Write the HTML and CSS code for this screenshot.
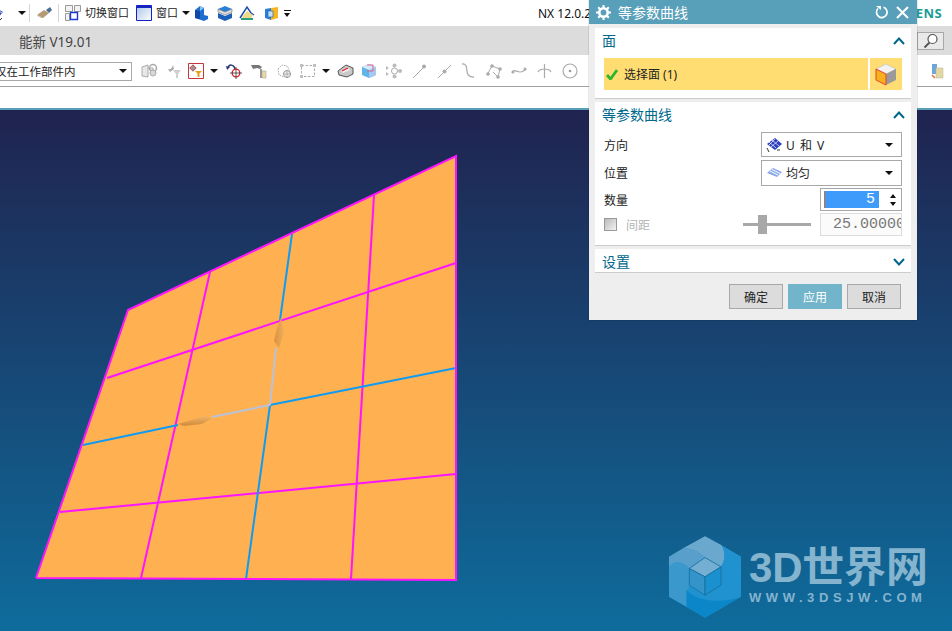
FILE: index.html
```html
<!DOCTYPE html>
<html lang="zh">
<head>
<meta charset="utf-8">
<title>等参数曲线</title>
<link rel="stylesheet" href="styles.css">
</head>
<body>
<div class="app">
  <div class="bar-quick">
    <svg class="ico mesh" width="16" height="16" viewBox="0 0 16 16"><path d="M-7 8 2 2l8 5-6 7z" fill="#3a4fc0"/><path d="M-3 5l8 6M1 2.500l8 5.500M-2 12 6 4" stroke="#fff" stroke-width=".8"/><path d="M5 13l2 2 2-2" fill="none" stroke="#333"/></svg>
    <span class="caret c-a"></span>
    <span class="sep s-a"></span>
    <svg class="ico m-brush" width="17" height="16" viewBox="0 0 17 16"><path d="M1 10 8 5l5 3-6 5z" fill="#b59a72"/><path d="M10 5l4-3 2 3-3 3z" fill="#4a6f90"/><path d="M1 10l4 3 2 0-4-1z" fill="#7a6038"/></svg>
    <span class="sep s-b"></span>
    <svg class="ico m-switch" width="16" height="16" viewBox="0 0 16 16"><path d="M.5.500h7v6h-7zM9.500.500h6v6h-6zM.5 8.500h4v7h-4z" fill="#f3f3f3" stroke="#999"/><path d="M5.500 7.500h7v7h-7z" fill="#fff" stroke="#1c3ad0" stroke-width="1.400"/></svg>
    <span class="qt t-switch">切换窗口</span>
    <svg class="ico m-win" width="16" height="16" viewBox="0 0 16 16"><defs><linearGradient id="w" x1="0" y1="0" x2="1" y2="1"><stop offset="0" stop-color="#a8c4e8"/><stop offset="1" stop-color="#fff"/></linearGradient></defs><path d="M.5.500h15v15H.5z" fill="url(#w)" stroke="#1322c8"/><path d="M1 1h14v2H1z" fill="#1526c0"/></svg>
    <span class="qt t-win">窗口</span>
    <span class="caret c-b"></span>
    <svg class="ico m-a" width="15" height="16" viewBox="0 0 15 16"><path d="M1 13V5l5-4 4 2v7l4 1v3l-4 2z" fill="#1f6fd0"/><path d="M6 1l4 2-4 3z" fill="#8dc0f0"/><path d="M1 5l5 1v8l-5-1z" fill="#1048a8"/></svg>
    <svg class="ico m-b" width="16" height="16" viewBox="0 0 16 16"><path d="M1 4l7-3 7 3-7 3z" fill="#2a7fd8"/><path d="M1 4v3l7 3 7-3V4l-7 3z" fill="#ddd" stroke="#555" stroke-width=".5"/><path d="M1 8v5l7 3 7-3V8l-7 3z" fill="#1b5fb8"/></svg>
    <svg class="ico m-c" width="16" height="16" viewBox="0 0 16 16"><path d="M1 13 8 2l4 6 3 2" fill="none" stroke="#1a4fb0" stroke-width="1.500"/><path d="M3 12l5-6 6 4-2 4H4z" fill="#eedb8a"/><path d="M2 14h12" stroke="#2aa080" stroke-width="2"/></svg>
    <svg class="ico m-d" width="15" height="16" viewBox="0 0 15 16"><path d="M7 3l7-1v11l-7 2z" fill="#f7b51e"/><path d="M1 4l6-1v12l-6-2z" fill="#2c7fd8"/><path d="M4 6h5v6H4z" fill="#bfe0f8" stroke="#1d5cb0" stroke-width=".6"/></svg>
    <span class="menu-more"></span>
    <span class="nx">NX 12.0.2</span>
    <span class="brand">SIEMENS</span>
  </div>

  <div class="bar-title">
    <span class="doc">能新 V19.01</span>
    <span class="search">
      <svg width="16" height="16" viewBox="0 0 16 16"><circle cx="9.500" cy="6" r="4.500" fill="#fff" stroke="#555" stroke-width="1.200"/><path d="M6.500 9.500 1.500 14.500" stroke="#555" stroke-width="2"/></svg>
    </span>
  </div>

  <div class="bar-select">
    <div class="scope"><span class="scope-text">仅在工作部件内</span><span class="caret caret-wide"></span></div>
    <svg class="ico g1" width="17" height="16" viewBox="0 0 17 16"><path d="M1 4l6-2v12l-6-1zM7 5h5v7" fill="#e8e8e8" stroke="#aaa"/><circle cx="12" cy="5" r="3.500" fill="none" stroke="#aaa" stroke-width="1.500"/><circle cx="12" cy="10" r="3" fill="#d8d8d8" stroke="#aaa"/></svg>
    <svg class="ico g2" width="15" height="16" viewBox="0 0 15 16"><path d="M0 5c2 3 5 1 6-3l1 4-4 3z" fill="#aaa"/><path d="M6 7h8l-3 4v4H9v-4z" fill="#d0d0d0"/></svg>
    <svg class="ico filter" width="16" height="16" viewBox="0 0 16 16"><path d="M.5.500h15v15H.5z" fill="#fff" stroke="#c8343c"/><circle cx="5" cy="5" r="2.300" fill="none" stroke="#c8343c"/><path d="M5 1.500v7M1.500 5h7" stroke="#444" stroke-width=".7"/><path d="M7 8h7l-2.500 2.500V14h-2v-3.500z" fill="#e8a01c"/></svg>
    <span class="caret c-f"></span>
    <svg class="ico g3" width="17" height="16" viewBox="0 0 17 16"><path d="M2 5c1-4 6-4 7 1" fill="none" stroke="#2d3a78" stroke-width="1.500"/><path d="M0 3l4 1-3 3z" fill="#2d3a78"/><circle cx="10" cy="10" r="3.800" fill="none" stroke="#e0202c" stroke-width="1.300"/><path d="M10 4v12M4 10h12" stroke="#333" stroke-width=".8"/></svg>
    <svg class="ico g4" width="17" height="16" viewBox="0 0 17 16"><path d="M1 2h8l3 2-2 2-3-1-4 1z" fill="#777"/><path d="M10 6h2v9h-2z" fill="#999"/><path d="M12 8h4v7h-4z" fill="#eed9a4" stroke="#999" stroke-width=".5"/></svg>
    <svg class="ico g5" width="16" height="16" viewBox="0 0 16 16"><path d="M2 6l4-4 5 1 2 3v3l-5 5-5-2z" fill="none" stroke="#aaa" stroke-dasharray="1.500 1"/><circle cx="11" cy="11" r="3.500" fill="#eee" stroke="#999"/><path d="M11 7v8M7 11h8" stroke="#999" stroke-width=".7"/></svg>
    <svg class="ico g6" width="16" height="16" viewBox="0 0 16 16"><path d="M1.500 2.500h13v11h-13z" fill="none" stroke="#aaa" stroke-dasharray="2.500 1.500"/><path d="M0 1h3v3H0zM13 1h3v3h-3zM0 12h3v3H0z" fill="#c0c0c0"/></svg>
    <span class="caret c-g"></span>
    <svg class="ico g7" width="17" height="16" viewBox="0 0 17 16"><path d="M1 8l8-6 7 3 0 6-6 3-8-2z" fill="#c9c9c9" stroke="#555"/><path d="M4 8l7-3 2 2-7 3z" fill="#eee"/><path d="M5 8l6-3" stroke="#e02830" stroke-width="1.300"/></svg>
    <svg class="ico g8" width="16" height="16" viewBox="0 0 16 16"><path d="M1 4l7-3 7 3v8l-7 3-7-3z" fill="#5fb4ea"/><path d="M8 7l7-3v8l-7 3z" fill="#a7c8ee"/><path d="M1 4l7 3 7-3-7-3z" fill="#d6e9f8"/><path d="M6 2h6v6H6" fill="none" stroke="#d8608a"/></svg>
    <svg class="ico g9" width="17" height="16" viewBox="0 0 17 16"><circle cx="8.500" cy="8" r="3" fill="none" stroke="#aaa"/><g fill="#bbb"><circle cx="8.500" cy="2.500" r="2"/><circle cx="8.500" cy="13.500" r="2"/><circle cx="14" cy="8" r="2"/><path d="M0 3l3 2-3 2zM0 9l3 2-3 2z"/></g></svg>
    <svg class="ico g10" width="15" height="16" viewBox="0 0 15 16"><path d="M1 15 13 3" stroke="#aaa"/><circle cx="12" cy="3.500" r="2" fill="#aaa"/></svg>
    <svg class="ico g11" width="15" height="16" viewBox="0 0 15 16"><path d="M1 15 14 2" stroke="#aaa"/><circle cx="7.500" cy="8.500" r="2" fill="#aaa"/></svg>
    <svg class="ico g12" width="15" height="16" viewBox="0 0 15 16"><path d="M2 1c9-1 0 14 12 13" fill="none" stroke="#aaa" stroke-width="1.300"/></svg>
    <svg class="ico g13" width="16" height="16" viewBox="0 0 16 16"><path d="M1 12 6 3l8 3-2 8-5-5" fill="none" stroke="#aaa"/><g fill="#aaa"><circle cx="6" cy="3" r="1.800"/><circle cx="14" cy="6" r="1.800"/><circle cx="12" cy="14" r="1.800"/><circle cx="2" cy="11" r="1.800"/></g></svg>
    <svg class="ico g14" width="16" height="16" viewBox="0 0 16 16"><path d="M1 10c3-7 6 4 14-4" fill="none" stroke="#aaa" stroke-width="1.300"/><circle cx="2" cy="9" r="1.500" fill="#aaa"/><circle cx="14" cy="6" r="1.500" fill="#aaa"/></svg>
    <svg class="ico g15" width="15" height="16" viewBox="0 0 15 16"><path d="M7.500 1v14M1 9c2-4 11-4 13 0" fill="none" stroke="#aaa" stroke-width="1.200"/></svg>
    <svg class="ico g16" width="16" height="16" viewBox="0 0 16 16"><circle cx="8" cy="8" r="7" fill="none" stroke="#aaa" stroke-width="1.200"/><circle cx="8" cy="8" r="1.300" fill="#999"/></svg>
    <svg class="ico g17" width="14" height="16" viewBox="0 0 14 16"><path d="M1 1h5v10H1z" fill="#6ea6dc"/><path d="M5 5h7v10H5z" fill="#e8d6a0" stroke="#a8b898" stroke-width=".5"/><path d="M1 12l3 3" stroke="#e0703c" stroke-width="1.500"/></svg>
    <span class="sep s-c"></span>
  </div>

  <div class="bar-gap"></div>

  <div class="viewport">
    <svg class="scene" width="952" height="521" viewBox="0 110 952 521">
      <defs>
        <linearGradient id="bump-v" x1="0" y1="0" x2="1" y2="0"><stop offset="0" stop-color="#d8923e"/><stop offset="1" stop-color="#f0ae5c"/></linearGradient>
        <linearGradient id="bump-h" x1="0" y1="0" x2="0" y2="1"><stop offset="0" stop-color="#f2b468"/><stop offset="1" stop-color="#cf8a38"/></linearGradient>
      </defs>
      <polygon class="sheet" points="128,310 456,156 456,580 36,578"/>
      <g class="pink">
        <line x1="210" y1="272" x2="141" y2="578"/>
        <line x1="374" y1="195" x2="351" y2="579"/>
        <line x1="107" y1="378" x2="456" y2="263"/>
        <line x1="60" y1="512" x2="456" y2="474"/>
      </g>
      <g class="cyan">
        <polyline points="292,234 280,320"/>
        <polyline points="270,405 246,579"/>
        <polyline points="83,445 178,425"/>
        <polyline points="270,405 456,368"/>
      </g>
      <g class="pale">
        <polyline points="276,348 270,405"/>
        <polyline points="212,417 270,405"/>
      </g>
      <path fill="url(#bump-v)" d="M281 318 284 333 279 348 274 341 277 328z"/>
      <path fill="url(#bump-h)" d="M178 424 205 416 212 418 202 424 184 426z"/>
      <g class="pink">
        <polyline points="36,578 128,310 456,156 456,580 36,578"/>
      </g>
    </svg>

    <div class="logo">
      <svg width="72" height="82" viewBox="27 33 216 245">
        <polygon points="135,33 243,95 243,215 135,278 27,215 27,95" fill="#1f92cf"/>
        <path d="M135 33 72 68C100 72 125 85 135 97L183 125C195 105 198 85 185 60Z" fill="#6aa8cd"/>
        <path d="M27 95 72 68C100 72 125 85 135 97L88 130C70 112 50 105 27 125Z" fill="#589fcc"/>
        <path d="M27 125C40 105 65 105 88 130V185L80 197C78 215 78 230 80 245L27 215Z" fill="#3b98cd"/>
        <path d="M80 195C110 230 190 235 243 215L135 278 80 245Z" fill="#0b86c8"/>
        <path d="M185 60 243 95V215C225 222 205 225 190 225L183 180V125C195 105 198 85 185 60Z" fill="#1f92cf"/>
        <g stroke="#17709f" stroke-width="2.500" stroke-linejoin="round">
          <polygon points="135,97 183,125 135,155 88,130" fill="#74aed2"/>
          <polygon points="88,130 135,155 135,210 88,180" fill="#3494ca"/>
          <polygon points="135,155 183,125 183,180 135,210" fill="#1a90cf"/>
        </g>
      </svg>
      <div class="logo-words">
        <div class="logo-main">3D世界网</div>
        <div class="logo-sub">WWW.3DSJW.COM</div>
      </div>
    </div>
  </div>

  <section class="dialog">
    <header class="dlg-head">
      <svg class="gear" width="15" height="15" viewBox="0 0 15 15"><circle cx="7.500" cy="7.500" r="4.200" fill="none" stroke="#fff" stroke-width="2.600"/><path d="M7.500 0v3M7.500 12v3M0 7.500h3M12 7.500h3M2.200 2.200l2 2M10.800 10.800l2 2M12.800 2.200l-2 2M4.200 10.800l-2 2" stroke="#fff" stroke-width="2"/></svg>
      <h1>等参数曲线</h1>
      <svg class="reset" width="14" height="14" viewBox="0 0 14 14"><path d="M8.500 2.200A5.300 5.300 0 1 1 3 3.500" fill="none" stroke="#fff" stroke-width="1.700"/><path d="M1 1h5v4z" fill="#fff"/></svg>
      <svg class="close" width="13" height="13" viewBox="0 0 13 13"><path d="M1 1l11 11M12 1 1 12" stroke="#fff" stroke-width="2"/></svg>
    </header>

    <div class="panel p-face">
      <div class="panel-head"><span>面</span><svg class="chev" width="12" height="8" viewBox="0 0 12 8"><path d="M1 7l5-5.500L11 7" fill="none" stroke="#00688b" stroke-width="2"/></svg></div>
      <div class="pick-row">
        <div class="pick">
          <svg width="12" height="11" viewBox="0 0 12 11"><path d="M1 6l3.500 4L11 1" fill="none" stroke="#2db52d" stroke-width="2.800"/></svg>
          <span>选择面 (1)</span>
        </div>
        <div class="pick-btn">
          <svg width="22" height="23" viewBox="0 0 22 23"><path d="M1 6l10-5 10 5-10 5z" fill="#f2f2f2" stroke="#bbb" stroke-width=".6"/><path d="M11 11l10-5v11l-10 5z" fill="#9a9a9a"/><path d="M1 6l10 5v11L1 17z" fill="#f5b01e" stroke="#e8432c"/></svg>
        </div>
      </div>
    </div>

    <div class="panel p-curve">
      <div class="panel-head"><span>等参数曲线</span><svg class="chev" width="12" height="8" viewBox="0 0 12 8"><path d="M1 7l5-5.500L11 7" fill="none" stroke="#00688b" stroke-width="2"/></svg></div>
      <div class="field f-dir">
        <label>方向</label>
        <div class="combo"><svg width="17" height="16" viewBox="0 0 17 16"><path d="M1 7l8-6 7 6-7 6z" fill="#2b3fc0"/><path d="M3 5l7 6M6 3l7 6M5 10l7-6M3 8l6-6" stroke="#fff" stroke-width=".7"/><path d="M1 11l2 4M11 13h3" stroke="#333"/></svg><span class="spaced">U 和 V</span><span class="caret"></span></div>
      </div>
      <div class="field f-pos">
        <label>位置</label>
        <div class="combo"><svg width="17" height="16" viewBox="0 0 17 16"><path d="M1 8l6-5 9 4-5 5z" fill="#8aa8e8"/><path d="M4 6l8 4M6 4.500l8 4" stroke="#fff"/></svg><span>均匀</span><span class="caret"></span></div>
      </div>
      <div class="field f-num">
        <label>数量</label>
        <div class="spin"><span class="spin-val">5</span><span class="spin-arrows"><i class="up"></i><i class="down"></i></span></div>
      </div>
      <div class="field f-gap">
        <span class="check"></span>
        <label>间距</label>
        <div class="slider"><i></i></div>
        <div class="num-off">25.00000</div>
      </div>
    </div>

    <div class="panel p-set">
      <div class="panel-head"><span>设置</span><svg class="chev" width="12" height="8" viewBox="0 0 12 8"><path d="M1 1l5 5.500L11 1" fill="none" stroke="#00688b" stroke-width="2"/></svg></div>
    </div>

    <footer class="dlg-foot">
      <button class="btn" type="button">确定</button>
      <button class="btn primary" type="button">应用</button>
      <button class="btn" type="button">取消</button>
    </footer>
  </section>
</div>
</body>
</html>
```
FILE: styles.css
```css
* { box-sizing: border-box; }
html, body { margin: 0; padding: 0; }
body {
  width: 952px;
  height: 631px;
  overflow: hidden;
  font-family: "Noto Sans", "Noto Sans CJK SC", sans-serif;
  font-size: 12px;
  color: #222;
  background: #fff;
}
.app { position: relative; width: 952px; height: 631px; display: flex; flex-direction: column; overflow: hidden; }
.ico { flex: none; display: block; }
.caret { display: inline-block; width: 0; height: 0; border-left: 4px solid transparent; border-right: 4px solid transparent; border-top: 4px solid #111; flex: none; }
.sep { width: 1px; height: 18px; background: #d4d4d4; flex: none; }

/* quick access bar */
.bar-quick { height: 26px; background: #fff; display: flex; align-items: center; flex: none; white-space: nowrap; }
.mesh { margin-left: -7px; }
.c-a { margin-left: 9px; }
.s-a { margin-left: 3px; }
.m-brush { margin-left: 6px; }
.s-b { margin-left: 5px; }
.m-switch { margin-left: 6px; }
.qt { font-size: 11px; color: #222; line-height: 14px; }
.t-switch { margin-left: 4px; width: 44px; }
.m-win { margin-left: 7px; }
.t-win { margin-left: 4px; width: 22px; }
.c-b { margin-left: 4px; }
.m-a { margin-left: 4px; }
.m-b { margin-left: 8px; }
.m-c { margin-left: 6px; }
.m-d { margin-left: 9px; }
.menu-more { width: 7px; height: 6px; margin-left: 5px; border-top: 1px solid #111; position: relative; flex: none; }
.menu-more::after { content: ""; position: absolute; left: 0; top: 2px; border-left: 3.500px solid transparent; border-right: 3.500px solid transparent; border-top: 4px solid #111; }
.nx { margin-left: 247px; font-size: 12px; color: #111; }
.brand { margin-left: auto; margin-right: 10px; color: #1a9c94; font-weight: 700; font-size: 13px; letter-spacing: .4px; }

/* document title bar */
.bar-title { height: 29px; background: #dcdcdc; display: flex; align-items: center; justify-content: space-between; padding: 0 8px 0 19px; flex: none; }
.doc { font-size: 13.500px; color: #444; }
.search { width: 27px; height: 18px; margin-top: 1px; background: #e9e9e9; border: 1px solid #a8a8a8; display: flex; align-items: center; justify-content: center; }

/* selection toolbar */
.bar-select { height: 32px; background: #fff; border-bottom: 1px solid #a0a0a0; display: flex; align-items: center; flex: none; white-space: nowrap; padding-top: 1px; }
.scope { width: 133px; height: 19px; margin-left: -1px; border: 1px solid #a8a8a8; display: flex; align-items: center; justify-content: space-between; padding-right: 4px; overflow: hidden; flex: none; }
.scope-text { font-size: 11.500px; margin-left: -5px; color: #222; }
.caret-wide { border-left-width: 4px; border-right-width: 4px; }
.g1 { margin-left: 9px; }
.g2 { margin-left: 9px; }
.filter { margin-left: 6px; }
.c-f { margin-left: 6px; }
.g3 { margin-left: 8px; }
.g4 { margin-left: 7px; }
.g5 { margin-left: 9px; }
.g6 { margin-left: 8px; }
.c-g { margin-left: 6px; }
.g7 { margin-left: 7px; }
.g8 { margin-left: 7px; }
.g9 { margin-left: 9px; }
.g10 { margin-left: 9px; }
.g11 { margin-left: 10px; }
.g12 { margin-left: 8px; }
.g13 { margin-left: 11px; }
.g14 { margin-left: 9px; }
.g15 { margin-left: 10px; }
.g16 { margin-left: 10px; }
.g17 { margin-left: 353px; }
.s-c { margin-left: 8px; }

.bar-gap { height: 23px; background: #fff; border-bottom: 2px solid #58a0b9; flex: none; }

/* 3D viewport */
.viewport { position: relative; flex: 1; background: linear-gradient(180deg, #20234f 0%, #0e6c9c 100%); }
.scene { display: block; }
.sheet { fill: #ffb152; }
.pink { fill: none; stroke: #ff14ff; stroke-width: 2; }
.cyan { fill: none; stroke: #0f9bf2; stroke-width: 2; }
.pale { fill: none; stroke: #b9c2d8; stroke-width: 2; }

.logo { position: absolute; left: 669px; top: 426px; display: flex; gap: 8px; }
.logo-words { padding-top: 10px; }
.logo-main { font-family: "Liberation Sans", "Noto Sans CJK SC", sans-serif; font-weight: 700; font-size: 42px; line-height: 44px; color: #85b4cf; white-space: nowrap; letter-spacing: -.2px; }
.logo-sub { font-family: "Liberation Sans", sans-serif; font-weight: 700; font-size: 13px; line-height: 14px; letter-spacing: 4.600px; color: #85b4cf; margin-top: 1px; white-space: nowrap; }

/* dialog */
.dialog { position: absolute; left: 589px; top: 0; width: 328px; height: 320px; background: #eee; display: flex; flex-direction: column; padding: 0 6px; box-shadow: 0 0 1px rgba(0,0,0,.5); }
.dlg-head { height: 24px; margin: 0 -6px; background: #58a0b9; display: flex; align-items: center; padding: 0 8px 0 7px; color: #fff; flex: none; }
.dlg-head h1 { margin: 0 0 0 7px; font-size: 14px; font-weight: 400; flex: 1; }
.reset { margin-right: 7px; }
.panel { background: #fff; border-bottom: 1px solid #ccc; flex: none; }
.p-face { height: 71px; margin-top: 4px; }
.p-curve { height: 144px; margin-top: 3px; }
.p-set { height: 24px; margin-top: 3px; }
.panel-head { height: 26px; display: flex; align-items: center; justify-content: space-between; padding: 0 6px 1px 7px; color: #00688b; font-size: 14px; line-height: 20px; }
.p-set .panel-head { height: 23px; padding-bottom: 0; padding-top: 2px; }
.pick-row { display: flex; gap: 2px; margin: 4px 9px 0; height: 32px; }
.pick { flex: 1; background: #ffdd73; display: flex; align-items: center; gap: 6px; padding-left: 2px; color: #222; }
.pick-btn { width: 32px; background: #ffdd73; display: flex; align-items: center; justify-content: center; }

.field { display: flex; align-items: center; position: relative; margin: 0 9px; }
.field label { color: #222; width: 157px; flex: none; }
.f-dir { height: 25px; margin-top: 4px; }
.f-pos { height: 26px; margin-top: 3px; }
.f-num { height: 23px; margin-top: 2px; }
.f-gap { height: 23px; margin-top: 2px; }
.combo { width: 141px; height: 100%; border: 1px solid #a8a8a8; display: flex; align-items: center; gap: 3px; padding: 0 8px 0 4px; }
.combo .caret { margin-left: auto; }
.spaced { letter-spacing: 1px; }
.spin { margin-left: 59px; width: 82px; height: 100%; border: 1px solid #a8a8a8; display: flex; align-items: center; padding-left: 3px; }
.spin-val { width: 55px; height: 17px; background: #3f9bfb; border-left: 1px solid #d07020; color: #fff; text-align: right; padding-right: 4px; font-family: "Liberation Mono", monospace; line-height: 17px; font-size: 15px; }
.spin-arrows { display: flex; flex-direction: column; gap: 4px; margin-left: 11px; }
.spin-arrows i { display: block; width: 0; height: 0; border-left: 3px solid transparent; border-right: 3px solid transparent; }
.up { border-bottom: 4px solid #111; }
.down { border-top: 4px solid #111; }
.f-gap label { width: auto; color: #b4b4b4; margin-left: 9px; }
.check { width: 13px; height: 13px; border: 1px solid #999; background: linear-gradient(135deg, #bbb, #f2f2f2); flex: none; }
.slider { width: 68px; height: 3px; background: #a8a8a8; position: relative; margin-left: 93px; flex: none; }
.slider i { position: absolute; left: 15px; top: -8px; width: 9px; height: 19px; background: #a8a8a8; }
.num-off { margin-left: 9px; width: 82px; height: 100%; border: 1px solid #dcdcdc; background: #fbfbfb; overflow: hidden; text-align: left; color: #777; font-family: "Liberation Mono", monospace; font-size: 15px; line-height: 21px; white-space: nowrap; padding-left: 12px; }

.dlg-foot { display: flex; justify-content: flex-end; gap: 5px; padding: 11px 10px 0 0; }
.btn { width: 54px; height: 25px; padding: 0; border: 1px solid #a8a8a8; background: #dcdcdc; color: #222; font: inherit; }
.btn.primary { background: #72b4ca; border-color: #72b4ca; color: #fff; }
```
